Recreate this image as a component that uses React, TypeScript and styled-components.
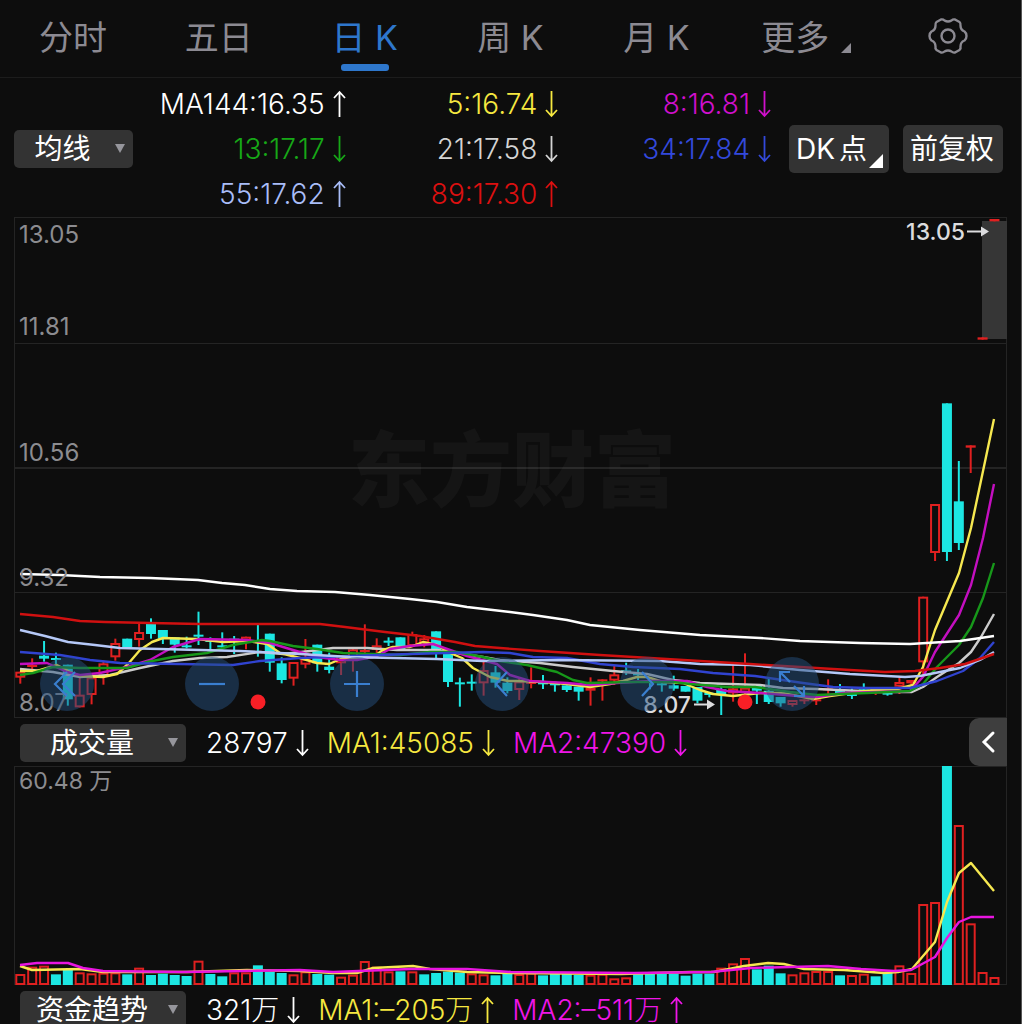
import React from "react";
import styled, { createGlobalStyle } from "styled-components";

const FONT = `Inter, "Noto Sans CJK SC", sans-serif`;
const RED = "#e02020";
const CYAN = "#1ce6e2";

const GlobalStyle = createGlobalStyle`
  * { box-sizing: border-box; }
  body { margin: 0; background: #0d0d0d; font-family: ${FONT}; }
  button, select { font-family: inherit; border: 0; margin: 0; padding: 0; cursor: pointer; }
`;

const Screen = styled.main`
  height: 100vh;
  overflow: hidden;
  background: #0d0d0d;
  border-right: 1px solid #555;
`;

const Tabs = styled.nav`
  display: grid;
  grid-template-columns: repeat(7, 1fr);
  height: 78px;
  border-bottom: 1px solid #1c1c1c;
`;

const Tab = styled.button<{ $active?: boolean }>`
  position: relative;
  display: flex;
  align-items: center;
  justify-content: center;
  gap: 12px;
  padding-bottom: 6px;
  background: none;
  font-size: 34px;
  font-weight: 400;
  white-space: nowrap;
  color: ${(p) => (p.$active ? "#2e77cc" : "#8c8a92")};
  &::after {
    content: "";
    display: ${(p) => (p.$active ? "block" : "none")};
    position: absolute;
    bottom: 6px;
    left: 50%;
    width: 48px;
    height: 7px;
    margin-left: -24px;
    border-radius: 3px;
    background: #2e77cc;
  }
`;

const MoreTab = styled(Tab)`
  padding-left: 8px;
`;

const Corner = styled.span<{ $size: number }>`
  align-self: flex-end;
  border-style: solid;
  border-width: 0 0 ${(p) => p.$size}px ${(p) => p.$size}px;
  border-color: transparent transparent currentColor transparent;
`;

const TabCorner = styled(Corner)`
  margin-bottom: 18px;
`;

const Legend = styled.section`
  display: flex;
  align-items: center;
  height: 139px;
  padding: 3px 18px 1px 14px;
`;

const Averages = styled.div`
  flex: 1;
  display: grid;
  grid-template-columns: repeat(3, 1fr);
  grid-auto-rows: 45px;
`;

const Reading = styled.span<{ $color: string }>`
  display: flex;
  align-items: center;
  justify-content: flex-end;
  gap: 8px;
  font-size: 28px;
  font-weight: 300;
  line-height: 28px;
  white-space: nowrap;
  color: ${(p) => p.$color};
`;

const Picker = styled.label<{ $width: number }>`
  position: relative;
  flex: none;
  width: ${(p) => p.$width}px;
  height: 38px;
  &::after {
    content: "";
    position: absolute;
    right: 8px;
    top: 14px;
    border-style: solid;
    border-width: 9px 5px 0;
    border-color: #96969c transparent transparent;
    pointer-events: none;
  }
`;

const Select = styled.select`
  appearance: none;
  display: block;
  width: 100%;
  height: 100%;
  padding-right: 22px;
  border-radius: 5px;
  background: #333;
  color: #fff;
  font-size: 28px;
  font-weight: 400;
  line-height: 38px;
  text-align: center;
  text-align-last: center;
`;

const Actions = styled.div`
  display: flex;
  gap: 14px;
  margin-left: 18px;
`;

const Action = styled.button`
  position: relative;
  display: flex;
  align-items: center;
  gap: 4px;
  width: 100px;
  height: 48px;
  padding: 0 7px;
  border-radius: 5px;
  background: #333;
  color: #fff;
  font-size: 28px;
  font-weight: 400;
  line-height: 28px;
  white-space: nowrap;
`;

const ActionCorner = styled(Corner)`
  position: absolute;
  right: 6px;
  bottom: 5px;
`;

const Panel = styled.div`
  position: relative;
  margin: 0 14px;
`;

const Plot = styled.svg`
  display: block;
  width: 100%;
`;

const Tools = styled.div`
  position: absolute;
  left: 26px;
  bottom: 7px;
  display: flex;
  gap: 91px;
`;

const Tool = styled.button`
  width: 54px;
  height: 54px;
  border-radius: 50%;
  background: rgba(38, 80, 125, 0.5);
  color: #3a7fd0;
  svg { display: block; }
`;

const Strip = styled.section`
  position: relative;
  display: flex;
  align-items: center;
  gap: 20px;
  height: 48px;
  margin: 0 14px;
  padding: 2px 0 0 6px;
`;

const Readings = styled.div`
  display: flex;
  gap: 18px;
`;

const Collapse = styled.button`
  position: absolute;
  top: 0;
  right: 0;
  display: flex;
  align-items: center;
  justify-content: center;
  width: 38px;
  height: 48px;
  border-radius: 10px 0 0 10px;
  background: #3e3e3e;
  color: #fff;
`;

const Arrow = ({ up = false }: { up?: boolean }) => (
  <svg width="13" height="28" viewBox="0 0 13 28" fill="none" stroke="currentColor" strokeWidth="1.8" aria-hidden="true">
    <path d={up ? "M6.5 27V2M1 8l5.5-6L12 8" : "M6.5 1v25M1 20l5.5 6L12 20"} />
  </svg>
);

const Value = ({ text, color, up }: { text: string; color: string; up?: boolean }) => (
  <Reading $color={color}>
    {text}
    <Arrow up={up} />
  </Reading>
);

const averages = [
  { text: "MA144:16.35", color: "#ffffff", up: true },
  { text: "5:16.74", color: "#f6e840" },
  { text: "8:16.81", color: "#d010cc" },
  { text: "13:17.17", color: "#17a817" },
  { text: "21:17.58", color: "#d4d4d4" },
  { text: "34:17.84", color: "#3349dc" },
  { text: "55:17.62", color: "#a9bdf8", up: true },
  { text: "89:17.30", color: "#dc1010", up: true },
];

/* One entry per trading day: direction, high, body top, body bottom, low.
   Levels are in thirds of a unit below the 560 line. */
type Candle = [string, number, number, number, number];
const candles: Candle[] = [
  ["r", 335, 335, 353, 371], ["r", 295, 315, 320, 330], ["c", 243, 287, 296, 305],
  ["c", 278, 294, 299, 312], ["c", 314, 314, 418, 437], ["r", 352, 404, 442, 442],
  ["r", 352, 352, 405, 433], ["r", 302, 310, 350, 374], ["r", 236, 249, 292, 302],
  ["c", 236, 236, 262, 266], ["r", 192, 216, 240, 260], ["c", 175, 192, 222, 236],
  ["c", 210, 210, 236, 252], ["c", 232, 232, 254, 278], ["c", 230, 256, 262, 265],
  ["c", 155, 224, 230, 255], ["c", 232, 240, 246, 270], ["c", 217, 256, 262, 268],
  ["c", 228, 236, 242, 282], ["r", 230, 230, 245, 268], ["c", 194, 243, 248, 290],
  ["c", 221, 221, 308, 335], ["c", 292, 310, 360, 370], ["r", 306, 306, 356, 377],
  ["r", 237, 296, 314, 325], ["c", 254, 254, 310, 335], ["c", 278, 320, 330, 340],
  ["r", 285, 285, 310, 345], ["r", 262, 268, 295, 335], ["r", 193, 270, 275, 280],
  ["r", 235, 256, 270, 280], ["c", 232, 242, 247, 258], ["c", 232, 232, 272, 272],
  ["r", 215, 222, 258, 262], ["r", 225, 235, 250, 262], ["c", 214, 214, 282, 298],
  ["c", 282, 282, 366, 381], ["c", 353, 367, 372, 440], ["c", 343, 365, 370, 392],
  ["r", 305, 330, 370, 407], ["c", 318, 337, 368, 383], ["c", 352, 368, 393, 400],
  ["r", 355, 364, 390, 420], ["r", 322, 366, 372, 385], ["c", 345, 367, 372, 387],
  ["c", 370, 370, 376, 395], ["c", 376, 376, 390, 396], ["c", 380, 380, 395, 422],
  ["r", 352, 384, 392, 437], ["r", 358, 358, 362, 422], ["r", 317, 343, 362, 375],
  ["c", 308, 331, 336, 345], ["c", 327, 340, 346, 360], ["c", 362, 362, 368, 388],
  ["c", 366, 370, 374, 395], ["c", 347, 376, 386, 392], ["c", 378, 378, 395, 395],
  ["c", 381, 381, 422, 430], ["c", 398, 398, 405, 412], ["c", 380, 388, 402, 465],
  ["r", 315, 385, 400, 425], ["r", 280, 383, 398, 405], ["c", 375, 375, 392, 432],
  ["c", 352, 392, 426, 432], ["c", 411, 411, 430, 440], ["r", 420, 420, 435, 440],
  ["r", 418, 418, 422, 432], ["r", 418, 418, 424, 435], ["r", 358, 385, 390, 405],
  ["c", 372, 390, 402, 402], ["c", 385, 402, 406, 417], ["c", 370, 388, 392, 402],
  ["r", 392, 392, 400, 405], ["c", 398, 398, 402, 407], ["r", 352, 366, 380, 402],
  ["r", 360, 360, 370, 374], ["r", 110, 110, 307, 350], ["r", -168, -168, -21, 3],
  ["c", -470, -470, -24, 3], ["c", -297, -176, -51, -30], ["r", -344, -344, -337, -261],
  ["r", -668, -668, -661, -661], ["r", -1023, -1023, -1016, -1016],
];

/* Top of each volume column, in thirds of a unit below the 940 line. */
const volumes = [
  102, 80, 77, 103, 90, 97, 100, 98, 97, 103, 83, 105, 101, 105, 108, 62, 102, 109, 97, 97, 76,
  96, 99, 103, 94, 102, 104, 110, 104, 63, 80, 94, 94, 94, 103, 99, 95, 98, 100, 103, 106, 102,
  102, 98, 106, 101, 101, 105, 104, 101, 115, 112, 96, 96, 101, 101, 107, 101, 101, 83, 70, 54,
  88, 77, 100, 103, 97, 93, 93, 106, 105, 101, 109, 99, 76, 99, -108, -114, -522, -345, -50, 96, 111,
];
const volumeKinds =
  "rrrccrrrrcrccccrccrrcccrrccrrrrrcrccccrrccrrccccrrrrcccccccrrrcccrrrrcrrccrrrrcrrrr";

const priceLines = [
  { color: "#cccccc", points: "20,669 53,672 80,677 110,675 140,668 173,661 200,658 227,657 260,652 283,654 310,651 333,648 367,648 397,650 437,650 457,653 483,657 500,660 540,663 573,667 613,671 647,674 673,680 700,683 760,685 783,688 817,689 883,692 912,692 923,687 937,677 959,663 971,652 981,637 994,614" },
  { color: "#f6e850", points: "20,671 37,671 57,665 70,672 80,676 103,677 117,674 128,664 140,650 152,642 163,638 197,639 223,642 247,641 267,644 280,653 300,658 317,663 329,664 343,658 373,657 383,650 393,647 410,647 423,642 437,645 450,653 462,658 473,668 490,677 508,681 517,681 543,682 567,684 590,687 610,684 623,681 637,677 647,677 663,682 683,683 700,690 713,694 733,696 760,693 783,693 813,699 830,696 873,690 897,689 913,685 923,667 935,630 959,573 971,528 994,419" },
  { color: "#c40fc0", points: "20,664 47,663 67,672 80,675 100,673 127,667 150,660 173,647 200,639 247,640 270,643 293,650 317,657 340,660 357,660 377,656 390,649 410,646 433,644 450,650 467,656 497,664 510,675 530,681 567,683 590,685 617,683 650,681 687,681 707,687 727,691 760,693 797,696 817,697 843,693 910,691 923,677 935,652 959,615 971,585 983,538 994,484" },
  { color: "#17981a", points: "20,675 33,673 53,667 80,668 127,668 147,662 173,657 207,653 233,645 262,640 270,641 293,646 317,649 343,653 373,654 400,655 430,652 457,652 483,657 500,661 527,665 557,672 573,680 587,683 633,682 673,682 690,684 727,687 755,687 790,692 817,695 867,693 910,691 923,684 937,667 959,645 971,627 983,598 994,563" },
  { color: "#3043d0", points: "20,652 60,655 90,660 120,663 180,664 233,665 260,661 300,658 350,656 410,654 483,652 510,653 533,657 567,658 600,664 633,667 680,669 713,673 755,676 803,683 833,687 867,688 910,688 937,681 963,671 980,658 994,642" },
  { color: "#b5c8f7", points: "20,630 45,636 68,642 95,645 120,648 160,649 240,651 300,654 350,657 437,659 483,661 560,660 660,661 700,664 750,665 800,670 850,674 905,677 920,676 960,668 980,660 994,652" },
  { color: "#d01010", points: "20,614 53,617 80,621 105,622 150,623 200,624 320,624 345,627 385,632 420,636 455,642 475,646 500,648 540,651 600,655 650,658 700,661 750,664 800,667 850,670 885,672 915,671 940,668 965,664 994,654" },
  { color: "#ffffff", points: "20,574 60,575 100,577 150,578 198,580 222,583 245,585 270,589 297,591 335,592 370,595 410,599 437,602 467,607 510,612 533,615 567,620 590,625 640,630 700,635 760,638 800,641 860,643 910,644 960,641 994,636" },
];

const volumeLines = [
  { color: "#f6e850", points: "20,966 32,970 80,969 103,972 187,972 247,970 300,971 333,973 357,973 373,968 413,966 430,969 467,972 511,973 621,974 691,972 714,972 744,966 768,963 784,964 804,969 844,970 884,973 898,972 912,969 935,942 947,902 959,873 971,863 994,891" },
  { color: "#e815e0", points: "20,965 37,963 68,963 83,968 103,971 183,972 300,970 333,972 411,969 467,969 511,972 634,973 711,972 751,968 828,966 861,969 894,971 911,970 935,957 947,938 959,922 971,917 994,917" },
];

const dayX = (i: number) => 20.3 + i * 11.88;

const Bar = ({ x, top, bottom, hollow }: { x: number; top: number; bottom: number; hollow: boolean }) =>
  hollow && bottom - top > 4 ? (
    <rect x={x - 4} y={top + 1} width={8} height={bottom - top - 2} fill="#0d0d0d" stroke={RED} strokeWidth={2} />
  ) : (
    <rect x={x - 5} y={top} width={10} height={Math.max(bottom - top, 2)} fill={hollow ? RED : CYAN} />
  );

const PriceChart = () => (
  <Plot viewBox="14 217 993 501" role="img" aria-label="日K">
    <g stroke="#242424" fill="none">
      <rect x="14.5" y="217.5" width="992" height="500" />
      <path d="M14 343.5h993M14 592.5h993" />
      <path d="M14 468h993" strokeWidth="2" />
    </g>
    <text x="512" y="500" textAnchor="middle" fontSize="82" fontWeight="900" fill="#fff" fillOpacity="0.035">
      东方财富
    </text>
    <rect x="982" y="221" width="25" height="118" fill="#363636" />
    {candles.map(([kind, high, top, bottom, low], i) => {
      const x = dayX(i);
      const y = (v: number) => 560 + v / 3;
      return (
        <g key={i}>
          <path d={`M${x} ${y(high)}V${y(low)}`} stroke={kind === "r" ? RED : CYAN} strokeWidth="2" />
          <Bar x={x} top={y(top)} bottom={y(bottom)} hollow={kind === "r"} />
        </g>
      );
    })}
    <g fill="none" strokeWidth="2.4" strokeLinejoin="round">
      {priceLines.map((l) => (
        <polyline key={l.color} points={l.points} stroke={l.color} />
      ))}
    </g>
    <g fill="#f81f26">
      <circle cx="258" cy="702" r="7.5" />
      <circle cx="745" cy="702" r="7.5" />
    </g>
    <g fill="#8c8c90" fontSize="24">
      <text x="19" y="243">13.05</text>
      <text x="19" y="335">11.81</text>
      <text x="19" y="461">10.56</text>
      <text x="19" y="586">9.32</text>
      <text x="19" y="711">8.07</text>
    </g>
    <g fill="#dcdcde" fontSize="23" fontWeight="500">
      <text x="965" y="240" textAnchor="end">13.05</text>
      <text x="691" y="713" textAnchor="end">8.07</text>
      <path d="M967 230.500h14v-4l8 5-8 5v-4h-14zM694 703.500h13v-4l8 5-8 5v-4h-13z" />
    </g>
  </Plot>
);

const VolumeChart = () => (
  <Plot viewBox="14 766 993 219" role="img" aria-label="成交量">
    <rect x="14.5" y="766.5" width="992" height="218" stroke="#242424" fill="none" />
    {volumes.map((v, i) => (
      <Bar key={i} x={dayX(i)} top={940 + v / 3} bottom={985} hollow={volumeKinds[i] === "r"} />
    ))}
    <g fill="none" strokeWidth="2.4" strokeLinejoin="round">
      {volumeLines.map((l) => (
        <polyline key={l.color} points={l.points} stroke={l.color} />
      ))}
    </g>
    <text x="19" y="789" fontSize="23" fill="#8c8c90">60.48 万</text>
  </Plot>
);

const tools = [
  { name: "最左", d: "M27 15L15 27l12 12M35 15L23 27l12 12" },
  { name: "缩小", d: "M14 27h26" },
  { name: "放大", d: "M14 27h26M27 14v26" },
  { name: "左移", d: "M32 15L21 27l11 12" },
  { name: "右移", d: "M22 15l11 12-11 12" },
  { name: "全屏", d: "M15 25V15h10M15 15l10 10M39 29v10H29M39 39L29 29" },
];

const Gear = () => (
  <svg width="40" height="38" viewBox="0 0 40 38" fill="none" stroke="currentColor" strokeWidth="2.4" strokeLinejoin="round" aria-hidden="true">
    <path d="M13 2.500Q15 2 16.500 3.500Q20 5.500 23.500 3.500Q25 2 27 2.500L31.500 5Q33 6.500 32.500 8.500Q32.500 13 36.500 14.500Q38.500 16 38.500 19Q38.500 22 36.500 23.500Q32.500 25 32.500 29.500Q33 31.500 31.500 33L27 35.500Q25 36 23.500 34.500Q20 32.500 16.500 34.500Q15 36 13 35.500L8.500 33Q7 31.500 7.500 29.500Q7.500 25 3.500 23.500Q1.500 22 1.500 19Q1.500 16 3.500 14.500Q7.500 13 7.500 8.500Q7 6.500 8.500 5Z" />
    <circle cx="20" cy="19" r="6.500" />
  </svg>
);

export default function App() {
  return (
    <>
      <GlobalStyle />
      <Screen>
        <Tabs>
          <Tab>分时</Tab>
          <Tab>五日</Tab>
          <Tab $active>日 K</Tab>
          <Tab>周 K</Tab>
          <Tab>月 K</Tab>
          <MoreTab>
            更多
            <TabCorner $size={10} />
          </MoreTab>
          <Tab aria-label="设置">
            <Gear />
          </Tab>
        </Tabs>

        <Legend>
          <Picker $width={119}>
            <Select aria-label="主图指标">
              <option>均线</option>
            </Select>
          </Picker>
          <Averages>
            {averages.map((a) => (
              <Value key={a.text} {...a} />
            ))}
          </Averages>
          <Actions>
            <Action>
              <span>DK</span>
              <span>点</span>
              <ActionCorner $size={14} />
            </Action>
            <Action>前复权</Action>
          </Actions>
        </Legend>

        <Panel>
          <PriceChart />
          <Tools>
            {tools.map((t) => (
              <Tool key={t.name} aria-label={t.name}>
                <svg width="54" height="54" fill="none" stroke="currentColor" strokeWidth="2.2" aria-hidden="true">
                  <path d={t.d} />
                </svg>
              </Tool>
            ))}
          </Tools>
        </Panel>

        <Strip>
          <Picker $width={166}>
            <Select aria-label="副图指标一">
              <option>成交量</option>
            </Select>
          </Picker>
          <Readings>
            <Value text="28797" color="#ffffff" />
            <Value text="MA1:45085" color="#f6e840" />
            <Value text="MA2:47390" color="#f015e8" />
          </Readings>
          <Collapse aria-label="展开">
            <svg width="16" height="24" fill="none" stroke="currentColor" strokeWidth="3" strokeLinecap="round" aria-hidden="true">
              <path d="M13 3L4 12l9 9" />
            </svg>
          </Collapse>
        </Strip>

        <Panel>
          <VolumeChart />
        </Panel>

        <Strip>
          <Picker $width={166}>
            <Select aria-label="副图指标二">
              <option>资金趋势</option>
            </Select>
          </Picker>
          <Readings>
            <Value text="321万" color="#ffffff" />
            <Value text="MA1:–205万" color="#f6e840" up />
            <Value text="MA2:–511万" color="#f015e8" up />
          </Readings>
        </Strip>
      </Screen>
    </>
  );
}
